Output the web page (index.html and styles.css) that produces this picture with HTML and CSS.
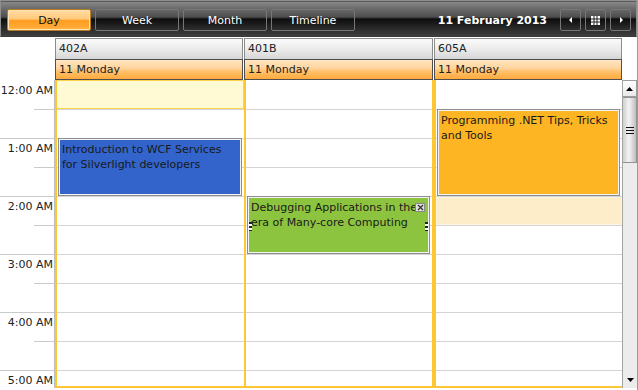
FILE: index.html
```html
<!DOCTYPE html>
<html>
<head>
<meta charset="utf-8">
<link rel="stylesheet" href="styles.css">
</head>
<body>
<div class="scheduler">
  <div class="toolbar">
    <div class="views">
      <div class="vbtn active">Day</div>
      <div class="vbtn">Week</div>
      <div class="vbtn">Month</div>
      <div class="vbtn">Timeline</div>
    </div>
    <div class="nav">
      <div class="date">11 February 2013</div>
      <div class="nbtn"><svg width="8" height="8" viewBox="0 0 8 8"><path d="M5 1 L2 4 L5 7 Z" fill="#fff"/></svg></div>
      <div class="nbtn"><svg width="9" height="9" viewBox="0 0 9 9"><path d="M0 0h9v9h-9z" fill="#fff"/><path d="M3 0v9M6 0v9M0 3h9M0 6h9" stroke="#222" stroke-width="1"/></svg></div>
      <div class="nbtn"><svg width="8" height="8" viewBox="0 0 8 8"><path d="M3 1 L6 4 L3 7 Z" fill="#fff"/></svg></div>
    </div>
  </div>
  <div class="header">
    <div class="corner"></div>
    <div class="hcol"><div class="res">402A</div><div class="day">11 Monday</div></div>
    <div class="hcol"><div class="res">401B</div><div class="day">11 Monday</div></div>
    <div class="hcol"><div class="res">605A</div><div class="day">11 Monday</div></div>
    <div class="corner"></div>
  </div>
  <div class="body">
    <div class="ruler">
      <div class="hour"><span>12:00 AM</span></div>
      <div class="hour"><span>1:00 AM</span></div>
      <div class="hour"><span>2:00 AM</span></div>
      <div class="hour"><span>3:00 AM</span></div>
      <div class="hour"><span>4:00 AM</span></div>
      <div class="hour"><span>5:00 AM</span></div>
    </div>
    <div class="col c1">
      <div class="slot selected"></div><div class="slot"></div><div class="slot"></div><div class="slot"></div>
      <div class="slot"></div><div class="slot"></div><div class="slot"></div><div class="slot"></div>
      <div class="slot"></div><div class="slot"></div><div class="slot"></div>
      <div class="appt blue a-wcf">Introduction to WCF Services for Silverlight developers</div>
    </div>
    <div class="col c2">
      <div class="slot"></div><div class="slot"></div><div class="slot"></div><div class="slot"></div>
      <div class="slot"></div><div class="slot"></div><div class="slot"></div><div class="slot"></div>
      <div class="slot"></div><div class="slot"></div><div class="slot"></div>
      <div class="appt green a-dbg">Debugging Applications in the era of Many-core Computing
        <span class="close"><svg width="7" height="7" viewBox="0 0 7 7"><path d="M1 1L6 6M6 1L1 6" stroke="#333" stroke-width="1.3"/></svg></span>
        <span class="handle hl"></span><span class="handle hr"></span>
      </div>
    </div>
    <div class="col c3">
      <div class="slot"></div><div class="slot"></div><div class="slot"></div><div class="slot"></div>
      <div class="slot hl-slot"></div><div class="slot"></div><div class="slot"></div><div class="slot"></div>
      <div class="slot"></div><div class="slot"></div><div class="slot"></div>
      <div class="appt orange a-net">Programming .NET Tips, Tricks and Tools</div>
    </div>
    <div class="scrollbar">
      <div class="sbtn up"><svg width="7" height="4" viewBox="0 0 7 4"><path d="M0 4L3.5 0L7 4Z" fill="#000"/></svg></div>
      <div class="thumb"><span></span><span></span><span></span></div>
      <div class="track"></div>
      <div class="sbtn down"><svg width="7" height="4" viewBox="0 0 7 4"><path d="M0 0L3.5 4L7 0Z" fill="#000"/></svg></div>
    </div>
  </div>
</div>
</body>
</html>
```

FILE: styles.css
```css
html, body {
  margin: 0;
  padding: 0;
  background: #fff;
}
.scheduler {
  width: 638px;
  height: 390px;
  overflow: hidden;
  font-family: "DejaVu Sans", Verdana, sans-serif;
  font-size: 11px;
  color: #1e1e1e;
  box-sizing: border-box;
  border-right: 1px solid #9a9a9a;
}
.toolbar {
  height: 37px;
  box-sizing: border-box;
  display: flex;
  align-items: flex-start;
  justify-content: space-between;
  padding: 8px 5px 0 6px;
  border: 1px solid #8e8e8e;
  border-bottom: 1px solid #3a3a3a;
  background: linear-gradient(to bottom, #8c8c8c 0px, #6a6a6a 8px, #4e4e4e 16px, #0e0e0e 18px, #161616 21px, #2c2c2c 28px, #3e3e3e 35px);
  box-shadow: inset 0 1px 0 #5b5b5b;
}
.views {
  display: flex;
  gap: 4px;
}
.vbtn {
  width: 84px;
  height: 22px;
  box-sizing: border-box;
  border: 1px solid #777;
  border-radius: 2px;
  color: #fff;
  display: flex;
  align-items: center;
  justify-content: center;
}
.vbtn.active {
  color: #111;
  border-color: #b77a22;
  background: linear-gradient(to bottom, #ffdba2 0%, #ffca7c 45%, #ff9e22 52%, #ffa52e 80%, #ffb84f 100%);
  box-shadow: inset 0 0 0 1px #ffe3b0;
}
.nav {
  display: flex;
  align-items: center;
  height: 22px;
}
.date {
  color: #fff;
  font-weight: bold;
  margin-right: 9px;
}
.nbtn {
  width: 21px;
  height: 22px;
  box-sizing: border-box;
  border: 1px solid #777;
  border-radius: 2px;
  display: flex;
  align-items: center;
  justify-content: center;
  margin-left: 4px;
}
.header {
  display: grid;
  grid-template-columns: 55px 189px 190px 189px 15px;
  padding-top: 1px;
  height: 43px;
  box-sizing: border-box;
}
.hcol {
  display: flex;
  flex-direction: column;
  margin-right: 1px;
}
.res {
  height: 21px;
  box-sizing: border-box;
  border: 1px solid #8c8c8c;
  border-bottom: none;
  background: linear-gradient(to bottom, #fbfbfb 0%, #ececec 50%, #d6d6d6 100%);
  padding: 3px 0 0 3px;
  color: #222;
}
.day {
  height: 21px;
  box-sizing: border-box;
  border: 1px solid #4f4f4f;
  background: linear-gradient(to bottom, #ffe6c3 0%, #ffd39a 45%, #ffc16b 60%, #ffaa3c 100%);
  padding: 3px 0 0 3px;
  color: #222;
}
.body {
  display: grid;
  grid-template-columns: 55px 189px 190px 188px 15px;
  height: 308px;
  overflow: hidden;
}
.ruler {
  border-right: 1px solid #bdbdbd;
  overflow: hidden;
}
.hour {
  height: 58px;
  box-sizing: border-box;
  border-top: 1px solid #cacaca;
  position: relative;
  text-align: right;
  padding: 3px 1px 0 0;
  line-height: 14px;
  color: #222;
}
.hour:first-child {
  border-top-color: transparent;
}
.hour::after {
  content: "";
  position: absolute;
  left: 34px;
  right: 0;
  top: 28px;
  border-top: 1px solid #cacaca;
}
.col {
  position: relative;
  overflow: hidden;
  border-left: 2px solid #fdc734;
  border-bottom: 2px solid #fdc734;
}
.c2 {
  border-right: 2px solid #fdc734;
}
.slot {
  height: 29px;
  box-sizing: border-box;
  border-top: 1px solid #d4d4d4;
}
.slot:first-child {
  border-top-color: transparent;
}
.slot.selected {
  background: #fffad3;
  border: 1px solid #fdd24e;
  border-left: none;
  height: 29px;
}
.slot.hl-slot {
  background: #fdeec9;
  box-shadow: inset 0 0 0 1px #fdf6e4;
}
.appt {
  position: absolute;
  left: 1px;
  right: 2px;
  box-sizing: border-box;
  border: 1px solid #8d8d8d;
  box-shadow: inset 0 0 0 1px #f4f4f4;
  padding: 3px 3px 0 3px;
  line-height: 15px;
  color: #1a1a1a;
}
.blue { background: #3264cb; }
.green { background: #8dc43f; }
.orange { background: #fdb523; }
.a-wcf { top: 58px; height: 58px; }
.a-dbg { top: 116px; height: 58px; }
.a-net { top: 29px; height: 87px; }
.close {
  position: absolute;
  right: 4px;
  top: 6px;
  width: 10px;
  height: 9px;
  box-sizing: border-box;
  border: 1px solid #888;
  background: #e0e0e0;
  display: flex;
  align-items: center;
  justify-content: center;
}
.handle {
  position: absolute;
  top: 25px;
  width: 3px;
  height: 9px;
  background: repeating-linear-gradient(to bottom, #222 0 2px, #fff 2px 4px);
}
.hl { left: 1px; }
.hr { right: 1px; }
.scrollbar {
  display: flex;
  flex-direction: column;
  background: #ececec;
  border-left: 1px solid #a4a4a4;
}
.sbtn {
  height: 17px;
  box-sizing: border-box;
  display: flex;
  align-items: center;
  justify-content: center;
}
.sbtn.up {
  border: 1px solid #9d9d9d;
  border-left: none;
  background: linear-gradient(to bottom, #ffffff, #e8e8e8);
}
.thumb {
  height: 66px;
  box-sizing: border-box;
  border: 1px solid #939393;
  border-left: none;
  background: linear-gradient(to right, #cfcfcf 0%, #f3f3f3 45%, #e6e6e6 60%, #bdbdbd 100%);
  display: flex;
  flex-direction: column;
  align-items: center;
  justify-content: center;
  gap: 2px;
}
.thumb span {
  width: 8px;
  height: 1px;
  background: #111;
}
.track {
  flex: 1;
}
.sbtn.down {
  height: 16px;
}
```
